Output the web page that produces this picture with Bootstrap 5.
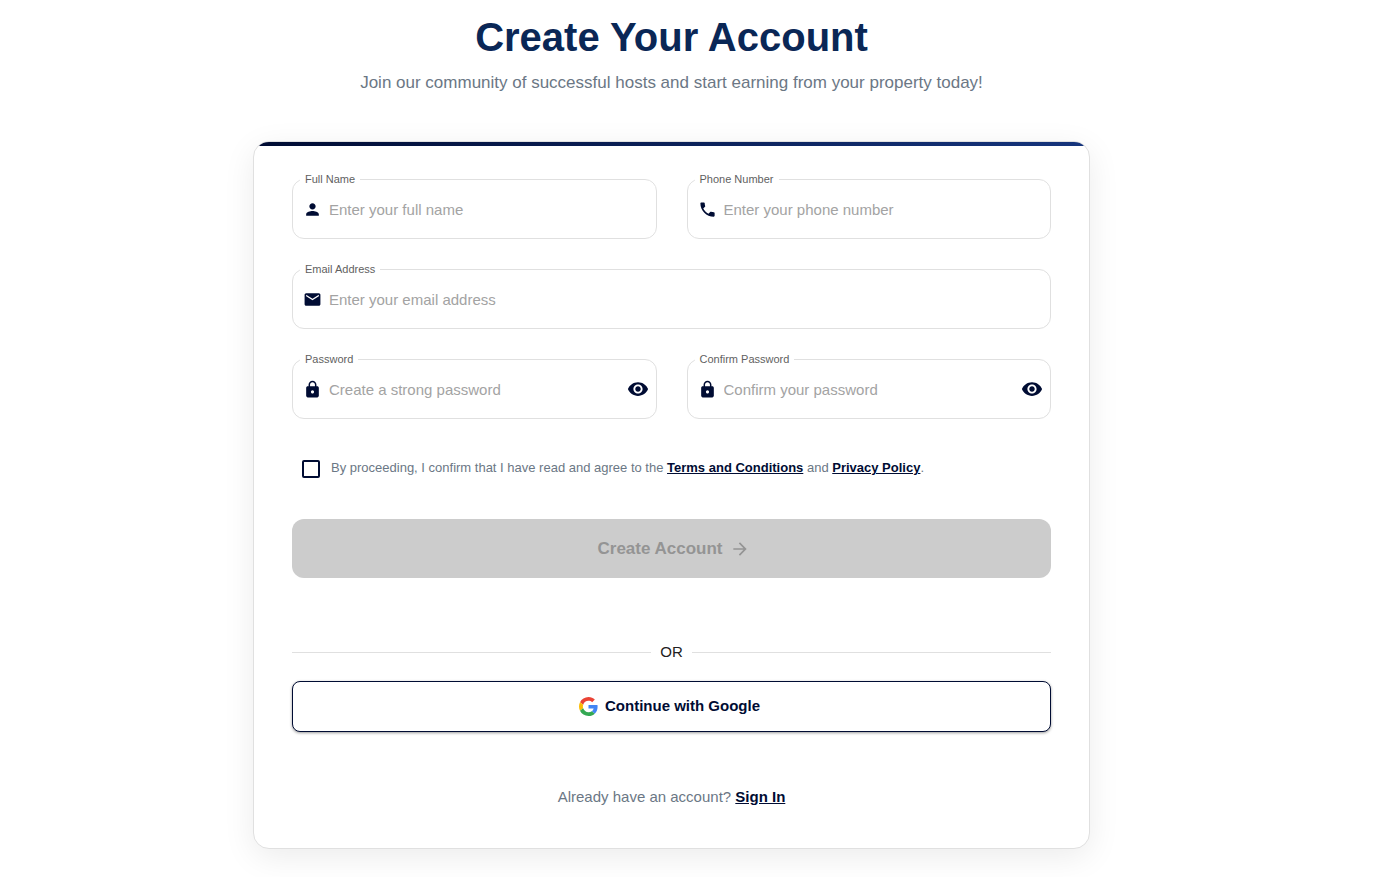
<!DOCTYPE html>
<html lang="en">
<head>
<meta charset="utf-8">
<meta name="viewport" content="width=device-width, initial-scale=1">
<title>Create Your Account</title>
<link href="https://cdn.jsdelivr.net/npm/bootstrap@5.3.0/dist/css/bootstrap.min.css" rel="stylesheet">
<style>
  :root { --navy: #000c33; --slate: #6b7785; --line: #e0e0e0; }
  body { font-family: "Liberation Sans", Arial, sans-serif; font-size: 15px; line-height: 24px; color: #212121; background: #fff; }
  .signup { padding: 13px 64px 28px 12px; }
  .signup-head { margin-bottom: 46px; }
  .signup-title { font-size: 40px; line-height: 48px; font-weight: 700; color: #0a2756; margin-bottom: 10px; }
  .signup-lead { font-size: 17px; line-height: 24px; color: var(--slate); }
  .signup-card { max-width: 837px; border: 1px solid var(--line); border-radius: 16px; box-shadow: 0 8px 32px rgba(0,0,0,.08); overflow: hidden; }
  .signup-bar { height: 4px; background: linear-gradient(90deg, #000c33, #16357d); }
  .signup-body { padding: 33px 38px 39px; }
  .field-grid { --bs-gutter-x: 30px; --bs-gutter-y: 30px; }
  .field { height: 60px; border: 1px solid var(--line); border-radius: 12px; padding: 0 7px 0 10px; gap: 7px; }
  .field:focus-within { border-color: var(--navy); }
  .field label { top: -8px; left: 7px; padding: 0 5px; font-size: 11px; line-height: 14px; color: #5f5f5f; background: #fff; }
  .field input { border: 0; outline: 0; padding: 2px 0 0; background: transparent; font-size: 15px; line-height: 24px; min-width: 0; }
  .field input::placeholder { color: #a3a3a3; }
  .field svg { fill: var(--navy); flex: none; }
  .eye-btn { line-height: 0; }
  .terms { font-size: 13px; line-height: 20px; color: var(--slate); gap: 11px; padding-left: 10px; margin: 39px 0 41px; }
  .terms input { appearance: none; width: 18px; height: 18px; border: 2px solid var(--navy); border-radius: 2px; margin: 2px 0 0; flex: none; }
  .terms input:checked { background: var(--navy); }
  .strong-link { color: var(--navy); font-weight: 700; text-decoration: underline; }
  .submit-btn, .submit-btn:disabled { height: 59px; border: 0; border-radius: 12px; background: #ccc; color: #949494; opacity: 1; font-size: 17px; font-weight: 700; gap: 7px; }
  .submit-btn svg { margin-right: -4px; }
  .or-line { gap: 9px; margin: 62px 0 17px; }
  .or-line hr { margin: 0; color: var(--line); opacity: 1; }
  .google-btn { height: 51px; padding-right: 16px; border: 1px solid var(--navy); border-radius: 8px; background: #fff; color: var(--navy); font-size: 15px; font-weight: 700; gap: 7px; box-shadow: 0 1px 3px rgba(0,0,0,.4); }
  .signin { margin: 53px 0 0; color: var(--slate); }
</style>
</head>
<body>
<svg class="d-none">
  <symbol id="i-lock" viewBox="0 0 24 24"><path d="M18 8h-1V6c0-2.760-2.240-5-5-5S7 3.240 7 6v2H6c-1.100 0-2 .9-2 2v10c0 1.100.9 2 2 2h12c1.100 0 2-.9 2-2V10c0-1.100-.9-2-2-2zm-6 9c-1.100 0-2-.9-2-2s.9-2 2-2 2 .9 2 2-.9 2-2 2zm3.100-9H8.900V6c0-1.710 1.390-3.100 3.100-3.100s3.100 1.390 3.100 3.100v2z"/></symbol>
  <symbol id="i-eye" viewBox="0 0 24 24"><path d="M12 4.500C7 4.500 2.730 7.610 1 12c1.730 4.390 6 7.500 11 7.500s9.270-3.110 11-7.500c-1.730-4.390-6-7.500-11-7.500zM12 17c-2.760 0-5-2.240-5-5s2.240-5 5-5 5 2.240 5 5-2.240 5-5 5zm0-8c-1.660 0-3 1.340-3 3s1.340 3 3 3 3-1.340 3-3-1.340-3-3-3z"/></symbol>
</svg>

<main class="signup">
  <header class="signup-head text-center">
    <h1 class="signup-title">Create Your Account</h1>
    <p class="signup-lead mb-0">Join our community of successful hosts and start earning from your property today!</p>
  </header>

  <section class="signup-card mx-auto bg-white">
    <div class="signup-bar"></div>
    <form class="signup-body">
      <div class="row field-grid">
        <div class="col-md-6">
          <div class="field position-relative d-flex align-items-center">
            <label class="position-absolute" for="name">Full Name</label>
            <svg width="19" height="19" viewBox="0 0 24 24"><path d="M12 12c2.210 0 4-1.790 4-4s-1.790-4-4-4-4 1.790-4 4 1.790 4 4 4zm0 2c-2.670 0-8 1.340-8 4v2h16v-2c0-2.660-5.330-4-8-4z"/></svg>
            <input class="flex-grow-1" id="name" type="text" placeholder="Enter your full name">
          </div>
        </div>
        <div class="col-md-6">
          <div class="field position-relative d-flex align-items-center">
            <label class="position-absolute" for="phone">Phone Number</label>
            <svg width="19" height="19" viewBox="0 0 24 24"><path d="M6.620 10.790c1.440 2.830 3.760 5.140 6.590 6.590l2.200-2.200c.27-.27.67-.36 1.020-.24 1.120.37 2.330.57 3.570.57.55 0 1 .45 1 1V20c0 .55-.45 1-1 1-9.390 0-17-7.610-17-17 0-.55.45-1 1-1h3.500c.55 0 1 .45 1 1 0 1.250.2 2.450.57 3.570.11.35.03.74-.25 1.020l-2.200 2.200z"/></svg>
            <input class="flex-grow-1" id="phone" type="tel" placeholder="Enter your phone number">
          </div>
        </div>
        <div class="col-12">
          <div class="field position-relative d-flex align-items-center">
            <label class="position-absolute" for="email">Email Address</label>
            <svg width="19" height="19" viewBox="0 0 24 24"><path d="M20 4H4c-1.100 0-1.990.9-1.990 2L2 18c0 1.100.9 2 2 2h16c1.100 0 2-.9 2-2V6c0-1.100-.9-2-2-2zm0 4l-8 5-8-5V6l8 5 8-5v2z"/></svg>
            <input class="flex-grow-1" id="email" type="email" placeholder="Enter your email address">
          </div>
        </div>
        <div class="col-md-6">
          <div class="field position-relative d-flex align-items-center">
            <label class="position-absolute" for="password">Password</label>
            <svg width="19" height="19"><use href="#i-lock"/></svg>
            <input class="flex-grow-1" id="password" type="password" placeholder="Create a strong password">
            <button class="eye-btn btn p-0 border-0" type="button" aria-label="Show password"><svg width="22" height="22"><use href="#i-eye"/></svg></button>
          </div>
        </div>
        <div class="col-md-6">
          <div class="field position-relative d-flex align-items-center">
            <label class="position-absolute" for="confirm">Confirm Password</label>
            <svg width="19" height="19"><use href="#i-lock"/></svg>
            <input class="flex-grow-1" id="confirm" type="password" placeholder="Confirm your password">
            <button class="eye-btn btn p-0 border-0" type="button" aria-label="Show password"><svg width="22" height="22"><use href="#i-eye"/></svg></button>
          </div>
        </div>
      </div>

      <div class="terms d-flex align-items-start">
        <input id="agree" type="checkbox">
        <label for="agree">By proceeding, I confirm that I have read and agree to the <a class="strong-link" href="#">Terms and Conditions</a> and <a class="strong-link" href="#">Privacy Policy</a>.</label>
      </div>

      <button class="submit-btn btn w-100 d-flex align-items-center justify-content-center" type="submit" disabled>
        Create Account
        <svg width="20" height="20" viewBox="0 0 24 24" fill="currentColor"><path d="M12 4l-1.410 1.410L16.170 11H4v2h12.170l-5.580 5.590L12 20l8-8z"/></svg>
      </button>

      <div class="or-line d-flex align-items-center">
        <hr class="flex-grow-1"><span>OR</span><hr class="flex-grow-1">
      </div>

      <button class="google-btn btn w-100 d-flex align-items-center justify-content-center" type="button">
        <svg width="19" height="19" viewBox="0 0 48 48">
          <path fill="#EA4335" d="M24 9.500c3.540 0 6.710 1.220 9.210 3.600l6.850-6.850C35.900 2.380 30.470 0 24 0 14.620 0 6.510 5.380 2.560 13.220l7.980 6.190C12.430 13.720 17.740 9.500 24 9.500z"/>
          <path fill="#4285F4" d="M46.980 24.550c0-1.570-.15-3.090-.38-4.550H24v9.020h12.940c-.58 2.960-2.260 5.480-4.780 7.180l7.730 6c4.510-4.180 7.090-10.360 7.090-17.650z"/>
          <path fill="#FBBC05" d="M10.530 28.590c-.48-1.450-.76-2.990-.76-4.590s.27-3.140.76-4.590l-7.980-6.190C.92 16.460 0 20.120 0 24s.92 7.540 2.560 10.780l7.970-6.190z"/>
          <path fill="#34A853" d="M24 48c6.480 0 11.930-2.130 15.890-5.810l-7.730-6c-2.150 1.450-4.920 2.300-8.160 2.300-6.260 0-11.570-4.220-13.470-9.910l-7.980 6.190C6.510 42.620 14.620 48 24 48z"/>
        </svg>
        Continue with Google
      </button>

      <p class="signin text-center">Already have an account? <a class="strong-link" href="#">Sign In</a></p>
    </form>
  </section>
</main>
<script src="https://cdn.jsdelivr.net/npm/bootstrap@5.3.0/dist/js/bootstrap.bundle.min.js"></script>
</body>
</html>
